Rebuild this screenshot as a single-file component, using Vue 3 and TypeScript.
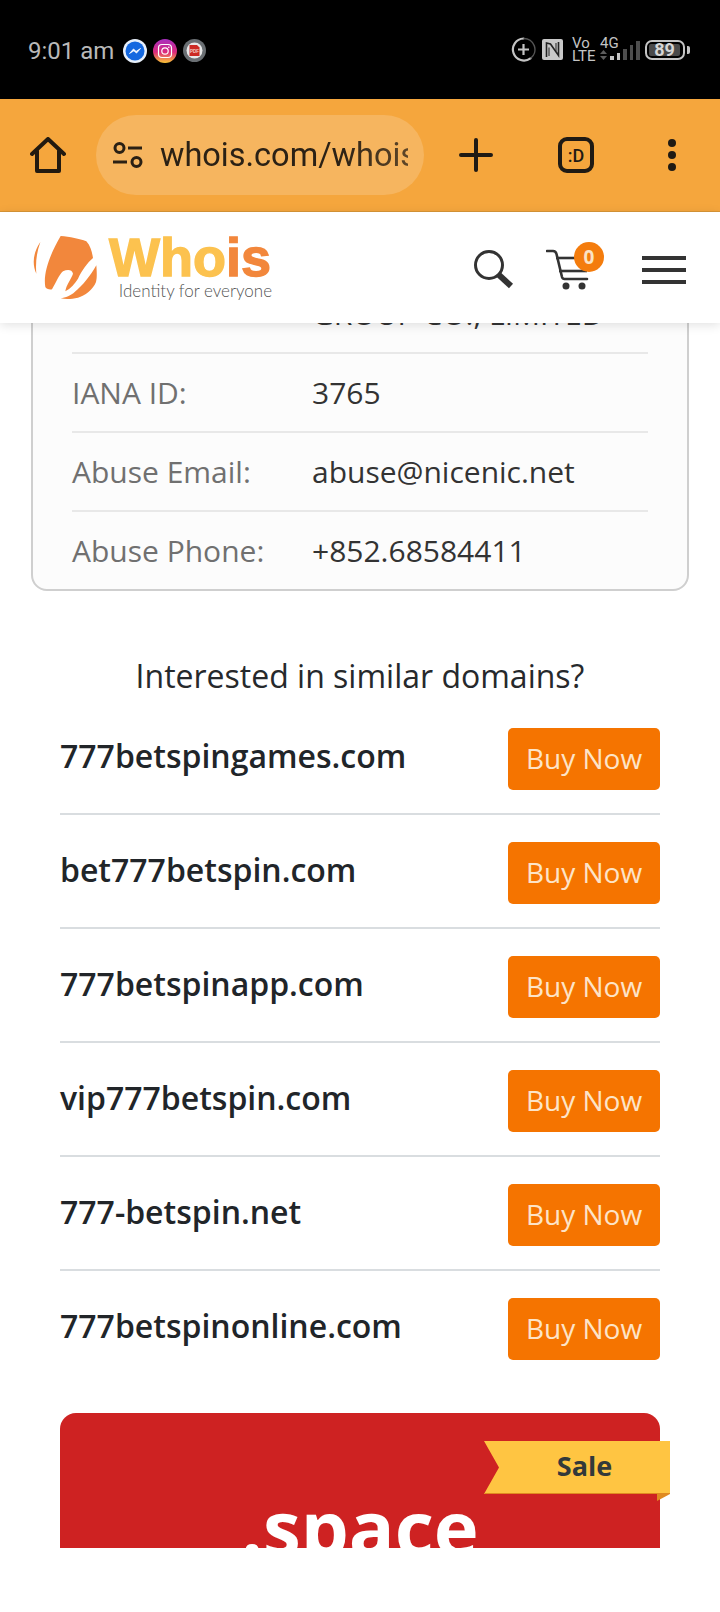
<script setup lang="ts">
const rows: { label: string; value: string }[] = [
  { label: 'IANA ID:', value: '3765' },
  { label: 'Abuse Email:', value: 'abuse@nicenic.net' },
  { label: 'Abuse Phone:', value: '+852.68584411' },
]
const domains: string[] = [
  '777betspingames.com',
  'bet777betspin.com',
  '777betspinapp.com',
  'vip777betspin.com',
  '777-betspin.net',
  '777betspinonline.com',
]
</script>

<template>
  <div class="phone">
    <div class="status">
      <div class="status-left">
        <span class="time">9:01 am</span>
        <svg class="notif" width="24" height="24" viewBox="0 0 24 24">
          <circle cx="12" cy="12" r="12" fill="#e8f0fb" />
          <circle cx="12" cy="12" r="9.500" fill="#1468e0" />
          <path d="M6.500 14.500 10.500 10l2.600 2.400L17.500 9.500l-4 4.600-2.600-2.300z" fill="#fff" stroke="#fff" stroke-width=".8" />
        </svg>
        <svg class="notif" width="24" height="24" viewBox="0 0 24 24">
          <defs>
            <linearGradient id="ig" x1="0" y1="0" x2="0" y2="1">
              <stop offset="0" stop-color="#a72fc0" />
              <stop offset=".55" stop-color="#dc2a7c" />
              <stop offset="1" stop-color="#fbc634" />
            </linearGradient>
          </defs>
          <circle cx="12" cy="12" r="12" fill="url(#ig)" />
          <rect x="5.500" y="5.500" width="13" height="13" rx="3.500" fill="none" stroke="#fff" stroke-width="1.200" />
          <circle cx="12" cy="12" r="3.200" fill="none" stroke="#fff" stroke-width="1.200" />
          <circle cx="15.800" cy="8.200" r=".8" fill="#fff" />
        </svg>
        <svg class="notif" width="23" height="23" viewBox="0 0 23 23">
          <circle cx="11.500" cy="11.500" r="11.500" fill="#6a6f73" />
          <circle cx="11.500" cy="11.500" r="8" fill="#e8e8e8" />
          <path d="M6.500 6h7.500l2.500 2.500V17h-10z" fill="#cc2a24" />
          <text x="11.500" y="13.500" font-size="4.500" font-weight="700" fill="#f4d0c8" text-anchor="middle" font-family="Liberation Sans, sans-serif">PDF</text>
        </svg>
      </div>
      <div class="status-right">
        <svg width="25" height="25" viewBox="0 0 25 25" fill="none" stroke="#c4c4c4">
          <path d="M19.500 21.300A11 11 0 1 1 12.500 1.500" stroke-width="2.200" stroke-linecap="round" />
          <path d="M12.500 1.500a11 11 0 0 1 7 19.800" stroke-width="1.500" stroke="#555" />
          <path d="M7 12.500h11M12.500 7v11" stroke-width="2.200" />
        </svg>
        <svg class="nfc" width="21" height="21" viewBox="0 0 21 21">
          <rect width="21" height="21" rx="2" fill="#c8c8c8" />
          <path d="M4.500 18V4l4 1 8 11.500V3" fill="none" stroke="#222" stroke-width="1.600" />
          <path d="M7 17V8.500M14 4v8.500" fill="none" stroke="#222" stroke-width="1" />
        </svg>
        <div class="volte"><span>Vo</span><span>LTE</span></div>
        <div class="net">
          <span class="net-4g">4G</span>
          <svg class="arrows" width="7" height="10" viewBox="0 0 7 10" fill="#5c5c5c">
            <path d="M3.500 0 7 4H0zM0 6h7l-3.500 4z" />
          </svg>
          <div class="bars">
            <i class="b1"></i><i class="b2"></i><i class="b3"></i><i class="b4"></i><i class="b5"></i>
          </div>
        </div>
        <div class="battery">
          <div class="batt-body"><span class="batt-fill">89</span></div>
          <i class="batt-tip"></i>
        </div>
      </div>
    </div>

    <div class="toolbar">
      <svg class="home" width="36" height="36" viewBox="0 0 36 36" fill="none" stroke="#221a10" stroke-width="4" stroke-linejoin="round" stroke-linecap="round">
        <path d="M2 17 18 2l16 15" />
        <path d="M7 14v20h22V14" />
      </svg>
      <div class="pill">
        <svg width="32" height="28" viewBox="0 0 32 28" fill="none" stroke="#2a2014" stroke-width="3">
          <circle cx="7.500" cy="7" r="4.500" />
          <path d="M16 7h14" />
          <path d="M1 21h14" />
          <circle cx="24.500" cy="21" r="4.500" />
        </svg>
        <div class="url">whois.com/whois/777betspin.com</div>
      </div>
      <svg class="plus" width="34" height="34" viewBox="0 0 34 34" stroke="#1f1a14" stroke-width="4" stroke-linecap="round">
        <path d="M2 17h30M17 2v30" />
      </svg>
      <div class="tab">:D</div>
      <div class="dots"><i></i><i></i><i></i></div>
    </div>

    <div class="site-header">
      <div class="logo">
        <svg width="72" height="72" viewBox="0 0 216 216" fill="#f2873c">
          <path d="M37 30C18 58 10 92 25 125 22 92 26 60 37 30z" />
          <path d="M98 12C125 14 155 20 175 28 188 42 192 60 195 78 178 92 162 115 150 140 140 156 128 170 112 178 114 160 130 140 135 125 132 112 118 112 105 118 92 130 85 150 72 172 64 174 54 170 52 165 44 120 70 60 98 12z" />
          <path d="M205 100C207 125 207 140 204 150 196 172 170 192 150 197 130 202 112 202 98 199 112 197 130 190 140 180 165 160 188 130 205 100z" />
        </svg>
        <div class="wordmark">
          <div class="whois"><span class="who">Who</span><span class="is">is</span></div>
          <div class="tag">Identity for everyone</div>
        </div>
      </div>
      <div class="site-actions">
        <svg class="search" width="40" height="40" viewBox="0 0 40 40" fill="none" stroke="#333">
          <circle cx="15" cy="16" r="13.500" stroke-width="3" />
          <path d="M25 26 37 37" stroke-width="6" />
        </svg>
        <div class="cart">
          <svg width="44" height="42" viewBox="0 0 44 42" fill="none" stroke="#333" stroke-width="2.600">
            <path d="M1 2h6c2 0 3 1 3.500 3L16 28c.4 1.500 1 2 2.500 2H41" stroke-linecap="round" />
            <path d="M10 9H40" />
            <path d="M13 22H41" />
            <circle cx="20" cy="37" r="3.500" fill="#333" stroke="none" />
            <circle cx="36" cy="37" r="3.500" fill="#333" stroke="none" />
          </svg>
          <span class="badge">0</span>
        </div>
        <div class="burger"><i></i><i></i><i></i></div>
      </div>
    </div>

    <div class="scroll">
      <div class="whois-card">
        <div class="row clipped"><span class="k"></span><span class="v">GROUP CO., LIMITED</span></div>
        <div v-for="r in rows" :key="r.label" class="row">
          <span class="k">{{ r.label }}</span>
          <span class="v">{{ r.value }}</span>
        </div>
      </div>

      <h2 class="similar">Interested in similar domains?</h2>
      <ul class="domains">
        <li v-for="d in domains" :key="d">
          <span class="dname">{{ d }}</span>
          <span class="buy">Buy Now</span>
        </li>
      </ul>

      <div class="banner">
        <div class="banner-clip"><span class="tld">.space</span></div>
        <div class="ribbon"><span>Sale</span></div>
        <i class="fold"></i>
      </div>
    </div>
  </div>
</template>

<style>
html, body { margin: 0; background: #fff; }
</style>

<style scoped>
.phone {
  width: 720px;
  height: 1612px;
  overflow: hidden;
  display: flex;
  flex-direction: column;
  background: #fff;
  font-family: "Open Sans", sans-serif;
}
.status {
  height: 99px;
  flex: none;
  background: #000;
  display: flex;
  align-items: center;
  justify-content: space-between;
  padding: 2px 30px 0 28px;
  box-sizing: border-box;
}
.status-left { display: flex; align-items: center; }
.time {
  font-family: Roboto, sans-serif;
  font-size: 24px;
  color: #b9b9b9;
  margin-right: 9px;
}
.notif { margin-right: 6px; }
.status-right { display: flex; align-items: center; margin-top: -2px; }
.nfc { margin-left: 6px; }
.volte {
  display: flex;
  flex-direction: column;
  font-family: Roboto, sans-serif;
  font-size: 15px;
  line-height: 12.500px;
  color: #c4c4c4;
  margin-left: 9px;
  width: 23px;
}
.net { position: relative; width: 38px; height: 22px; margin-left: 5px; }
.net-4g {
  position: absolute;
  left: 0;
  top: -2px;
  font-family: Roboto, sans-serif;
  font-size: 15px;
  line-height: 12px;
  color: #c4c4c4;
}
.arrows { position: absolute; left: 0; bottom: 1px; }
.bars {
  position: absolute;
  left: 10px;
  bottom: 1px;
  display: flex;
  align-items: flex-end;
  gap: 3px;
}
.bars i { display: block; width: 3.500px; background: #c4c4c4; }
.bars .b1 { height: 4px; }
.bars .b2 { height: 7px; }
.bars .b3 { height: 11px; background: #4e4e4e; }
.bars .b4 { height: 15px; background: #4e4e4e; }
.bars .b5 { height: 19px; background: #4e4e4e; }
.battery { display: flex; align-items: center; margin-left: 7px; }
.batt-body {
  width: 36px;
  height: 16px;
  border: 2px solid #c4c4c4;
  border-radius: 7px;
  display: flex;
  align-items: center;
}
.batt-fill {
  margin-left: 2px;
  width: 31px;
  height: 12px;
  background: #4a4a4a;
  border-radius: 2px;
  color: #d6d6d6;
  font-family: Roboto, sans-serif;
  font-weight: 700;
  font-size: 18px;
  line-height: 12px;
  text-align: center;
}
.batt-tip { display: block; width: 3px; height: 8px; margin-left: 2px; background: #c4c4c4; border-radius: 0 2px 2px 0; }

.toolbar {
  height: 113px;
  flex: none;
  box-sizing: border-box;
  background: #f5a63d;
  border-bottom: 1px solid #d99637;
  display: flex;
  align-items: center;
  position: relative;
}
.home { margin-left: 30px; flex: none; }
.pill {
  margin-left: 30px;
  width: 328px;
  height: 80px;
  border-radius: 40px;
  background: #f6b55f;
  display: flex;
  align-items: center;
  padding: 0 16px;
  box-sizing: border-box;
  flex: none;
}
.url {
  margin-left: 16px;
  font-family: Roboto, sans-serif;
  font-size: 32.500px;
  color: #2b2115;
  white-space: nowrap;
  overflow: hidden;
  flex: 1;
  min-width: 0;
  -webkit-mask-image: linear-gradient(90deg, #000 72%, rgba(0, 0, 0, 0.75) 100%);
  mask-image: linear-gradient(90deg, #000 72%, rgba(0, 0, 0, 0.75) 100%);
}
.plus { margin-left: 35px; flex: none; }
.tab {
  margin-left: 65px;
  width: 36px;
  height: 36px;
  box-sizing: border-box;
  border: 4px solid #1f1a14;
  border-radius: 9px;
  flex: none;
  display: flex;
  align-items: center;
  justify-content: center;
  font-family: Roboto, sans-serif;
  font-size: 18px;
  font-weight: 500;
  color: #1f1a14;
}
.dots { margin-left: 74px; display: flex; flex-direction: column; gap: 4px; flex: none; }
.dots i { display: block; width: 8px; height: 8px; border-radius: 50%; background: #1f1a14; }

.site-header {
  height: 111px;
  flex: none;
  background: #fff;
  display: flex;
  align-items: center;
  justify-content: space-between;
  box-shadow: 0 2px 10px rgba(0, 0, 0, 0.12);
  position: relative;
  z-index: 2;
  padding: 0 34px 0 28px;
}
.logo { display: flex; align-items: center; gap: 8px; }
.wordmark { display: flex; flex-direction: column; align-items: flex-end; }
.whois {
  font-family: "Liberation Sans", sans-serif;
  font-weight: 700;
  font-size: 54px;
  line-height: 46px;
  white-space: nowrap;
  padding: 0 1px;
}
.who { color: #fcc24f; -webkit-text-stroke: 1.400px #fcc24f; }
.is { color: #f2873c; -webkit-text-stroke: 1.400px #f2873c; }
.tag {
  font-family: Lato, sans-serif;
  font-weight: 300;
  font-size: 17px;
  line-height: 20px;
  margin-top: 1px;
  color: #555;
}
.site-actions { display: flex; align-items: center; padding-top: 5px; }
.search { margin-right: 32px; margin-top: -3px; }
.cart { position: relative; width: 44px; height: 42px; margin-right: 52px; }
.cart svg { display: block; }
.badge {
  position: absolute;
  left: 28px;
  top: -7px;
  width: 30px;
  height: 30px;
  border-radius: 50%;
  background: #f47c0d;
  color: #fbe3c4;
  font-weight: 700;
  font-size: 19px;
  line-height: 30px;
  text-align: center;
}
.burger { display: flex; flex-direction: column; gap: 8px; }
.burger i { display: block; width: 44px; height: 4px; background: #333; }

.scroll { flex: 1; min-height: 0; overflow: hidden; position: relative; }
.whois-card {
  margin: -50px 31px 0;
  border: 2px solid #cfcfcf;
  border-radius: 16px;
  background: #fcfcfc;
  padding: 0 39px;
  height: 318px;
  box-sizing: border-box;
  display: flex;
  flex-direction: column;
}
.row {
  height: 79px;
  flex: none;
  display: flex;
  align-items: center;
  border-top: 2px solid #e8e8e8;
  box-sizing: border-box;
  font-size: 30px;
}
.row.clipped { border-top: 0; height: 77px; }
.k { width: 240px; color: #707070; flex: none; }
.v { color: #333; white-space: nowrap; }

.similar {
  margin: 60px 0 0;
  text-align: center;
  font-weight: 400;
  font-size: 32px;
  line-height: 50px;
  color: #26292c;
}
.domains {
  list-style: none;
  margin: 27px 60px 0;
  padding: 0;
}
.domains li {
  height: 87px;
  box-sizing: border-box;
  display: flex;
  justify-content: space-between;
  align-items: flex-start;
  border-bottom: 2px solid #d9dde0;
}
.domains li + li { margin-top: 27px; }
.domains li:last-child { border-bottom: 0; }
.dname {
  font-weight: 600;
  font-size: 32px;
  line-height: 44px;
  margin-top: 6px;
  color: #212529;
}
.buy {
  width: 152px;
  height: 62px;
  border-radius: 5px;
  background: #f57400;
  color: #fde4c8;
  font-size: 28px;
  line-height: 60px;
  text-align: center;
}
.banner {
  position: relative;
  margin: 28px 60px 0;
  height: 135px;
}
.banner-clip {
  height: 100%;
  overflow: hidden;
  background: #ce2222;
  border-radius: 16px 16px 0 0;
  text-align: center;
}
.tld {
  display: block;
  margin-top: 64px;
  color: #fff;
  font-weight: 700;
  font-size: 76px;
  line-height: 100px;
}
.ribbon {
  position: absolute;
  right: -10px;
  top: 28px;
  width: 186px;
  height: 53px;
  background: #ffc542;
  border-bottom: 1px solid #e08a20;
  box-sizing: border-box;
  clip-path: polygon(0 0, 100% 0, 100% 100%, 0 100%, 15px 50%);
  display: flex;
  align-items: center;
  justify-content: center;
  color: #33393a;
  font-weight: 700;
  font-size: 27px;
  padding: 0 0 3px 15px;
}
.fold {
  position: absolute;
  right: -10px;
  top: 81px;
  width: 13px;
  height: 7px;
  background: #e08a20;
  clip-path: polygon(0 100%, 100% 0, 0 0);
}
</style>
